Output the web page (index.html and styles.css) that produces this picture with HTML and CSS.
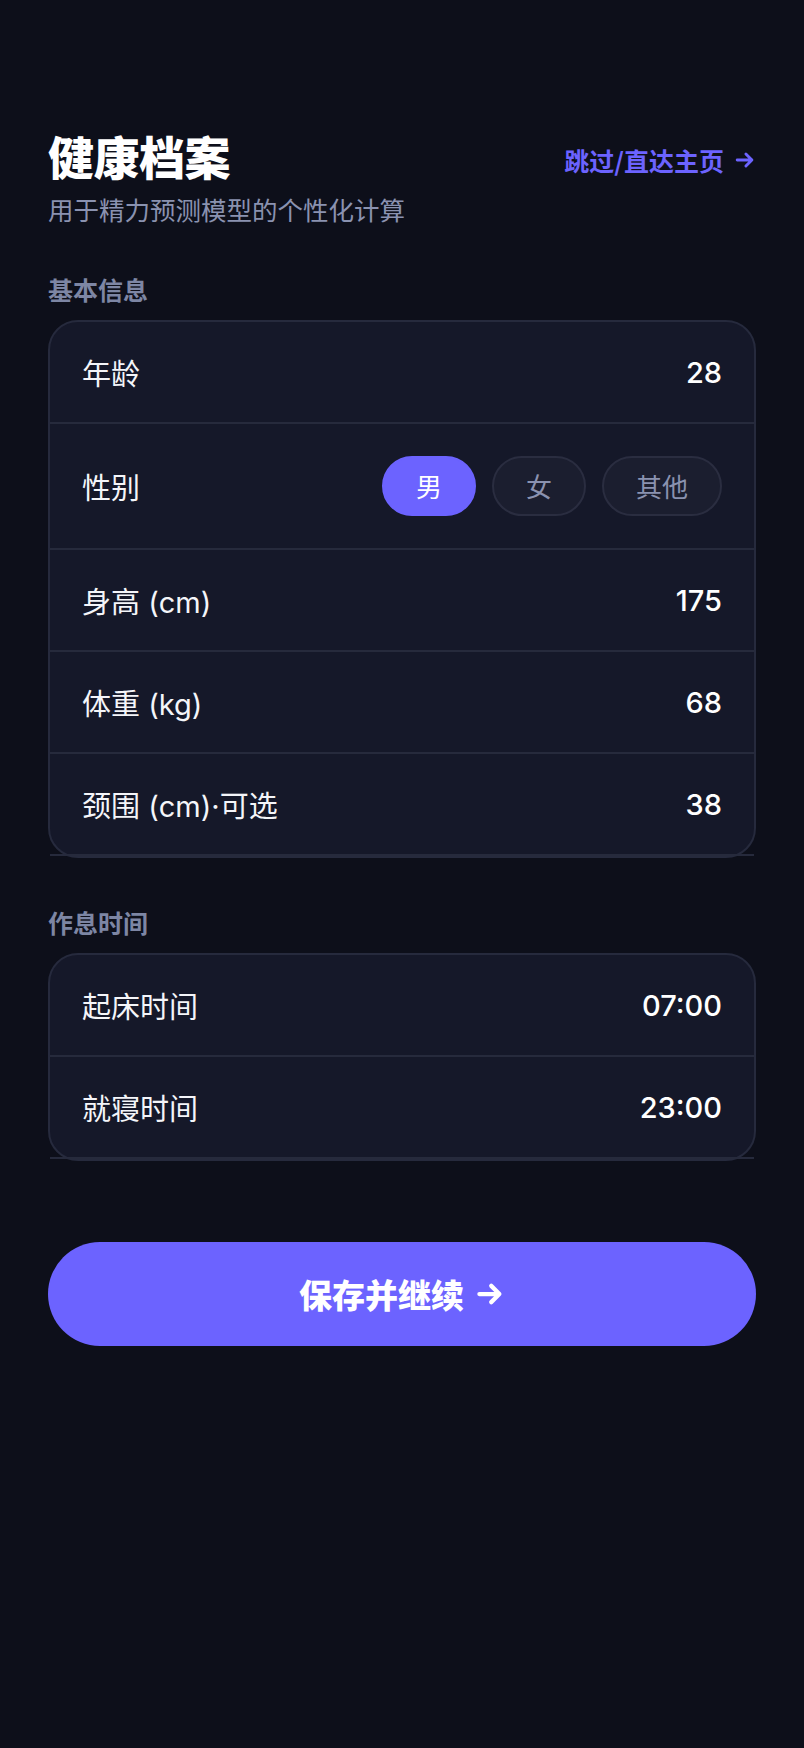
FILE: index.html
```html
<!DOCTYPE html>
<html lang="zh-CN">
<head>
<meta charset="utf-8">
<title>健康档案</title>
<link rel="stylesheet" href="styles.css">
</head>
<body>
<main class="page">
  <header class="header">
    <div class="header-text">
      <h1 class="title">健康档案</h1>
      <p class="subtitle">用于精力预测模型的个性化计算</p>
    </div>
    <a class="skip" href="#">跳过/直达主页<svg class="arrow arrow-skip" viewBox="0 0 24 24" aria-hidden="true"><path d="M3.5 12H19.5M13 5.5L19.5 12L13 18.5"/></svg></a>
  </header>

  <section class="section">
    <h2 class="section-label">基本信息</h2>
    <div class="card">
      <div class="row"><span class="label">年龄</span><span class="value">28</span></div>
      <div class="row row-gender">
        <span class="label">性别</span>
        <div class="pills">
          <button class="pill pill-active">男</button>
          <button class="pill">女</button>
          <button class="pill">其他</button>
        </div>
      </div>
      <div class="row"><span class="label">身高 (cm)</span><span class="value">175</span></div>
      <div class="row"><span class="label">体重 (kg)</span><span class="value">68</span></div>
      <div class="row"><span class="label">颈围 (cm)·可选</span><span class="value">38</span></div>
    </div>
  </section>

  <section class="section section-second">
    <h2 class="section-label">作息时间</h2>
    <div class="card">
      <div class="row"><span class="label">起床时间</span><span class="value">07:00</span></div>
      <div class="row"><span class="label">就寝时间</span><span class="value">23:00</span></div>
    </div>
  </section>

  <button class="save">保存并继续<svg class="arrow arrow-save" viewBox="0 0 24 24" aria-hidden="true"><path d="M3.5 12H19.5M13 5.5L19.5 12L13 18.5"/></svg></button>
</main>
</body>
</html>
```
FILE: styles.css
```css
* { box-sizing: border-box; }

html, body {
  margin: 0;
  padding: 0;
  background: #0d0f1a;
  min-height: 100%;
}

body {
  font-family: Inter, "Noto Sans CJK SC", sans-serif;
  color: #ffffff;
  min-height: 1748px;
}

.page {
  padding: 129px 48px 0;
  display: flex;
  flex-direction: column;
}

.header {
  display: flex;
  justify-content: space-between;
  align-items: flex-start;
}

.header-text {
  display: flex;
  flex-direction: column;
}

.title {
  margin: 0;
  font-family: "Noto Sans CJK SC", sans-serif;
  font-size: 46px;
  line-height: 52px;
  font-weight: 900;
  color: #ffffff;
  letter-spacing: -0.5px;
}

.subtitle {
  margin: 11px 0 0;
  font-family: "Noto Sans CJK SC", sans-serif;
  font-size: 25.5px;
  line-height: 34px;
  font-weight: 400;
  color: #8a92b0;
}

.skip {
  margin-top: 5px;
  display: flex;
  align-items: center;
  height: 52px;
  font-family: "Noto Sans CJK SC", sans-serif;
  font-size: 25px;
  font-weight: 700;
  color: #6c63ff;
  text-decoration: none;
  white-space: nowrap;
}

.arrow {
  fill: none;
  stroke: currentColor;
  stroke-linecap: round;
  stroke-linejoin: round;
}

.arrow-skip {
  width: 22px;
  height: 22px;
  margin-left: 10px;
  stroke-width: 3.2;
}

.arrow-save {
  width: 30px;
  height: 30px;
  margin-left: 11px;
  stroke-width: 3.4;
}

.section {
  margin-top: 47px;
  display: flex;
  flex-direction: column;
}

.section-second {
  margin-top: 48px;
}

.section-label {
  margin: 0 0 15px;
  font-family: "Noto Sans CJK SC", sans-serif;
  font-size: 25px;
  line-height: 32px;
  font-weight: 700;
  color: #7d86a4;
}

.card {
  background: #151829;
  border: 2px solid #262a3d;
  border-radius: 30px;
}

.row {
  display: flex;
  justify-content: space-between;
  align-items: center;
  height: 102px;
  padding: 0 32px;
  border-bottom: 2px solid #262a3c;
}

.row-gender {
  height: 126px;
}

.label {
  font-size: 29px;
  font-weight: 400;
  color: #f4f5f9;
}

.value {
  font-size: 29px;
  font-weight: 500;
  color: #ffffff;
}

.pills {
  display: flex;
  gap: 16px;
}

.pill {
  height: 60px;
  padding: 0 32px;
  border-radius: 30px;
  border: 2px solid #2a2d40;
  background: #1b1e2f;
  color: #8a92b0;
  font-family: "Noto Sans CJK SC", sans-serif;
  font-size: 26px;
  line-height: 1;
  cursor: pointer;
}

.pill-active {
  background: #6c63ff;
  border-color: #6c63ff;
  color: #ffffff;
}

.save {
  margin-top: 81px;
  height: 104px;
  display: flex;
  align-items: center;
  justify-content: center;
  border: none;
  border-radius: 52px;
  background: #6c63ff;
  color: #ffffff;
  font-family: "Noto Sans CJK SC", sans-serif;
  font-size: 33px;
  font-weight: 900;
  cursor: pointer;
}
```
